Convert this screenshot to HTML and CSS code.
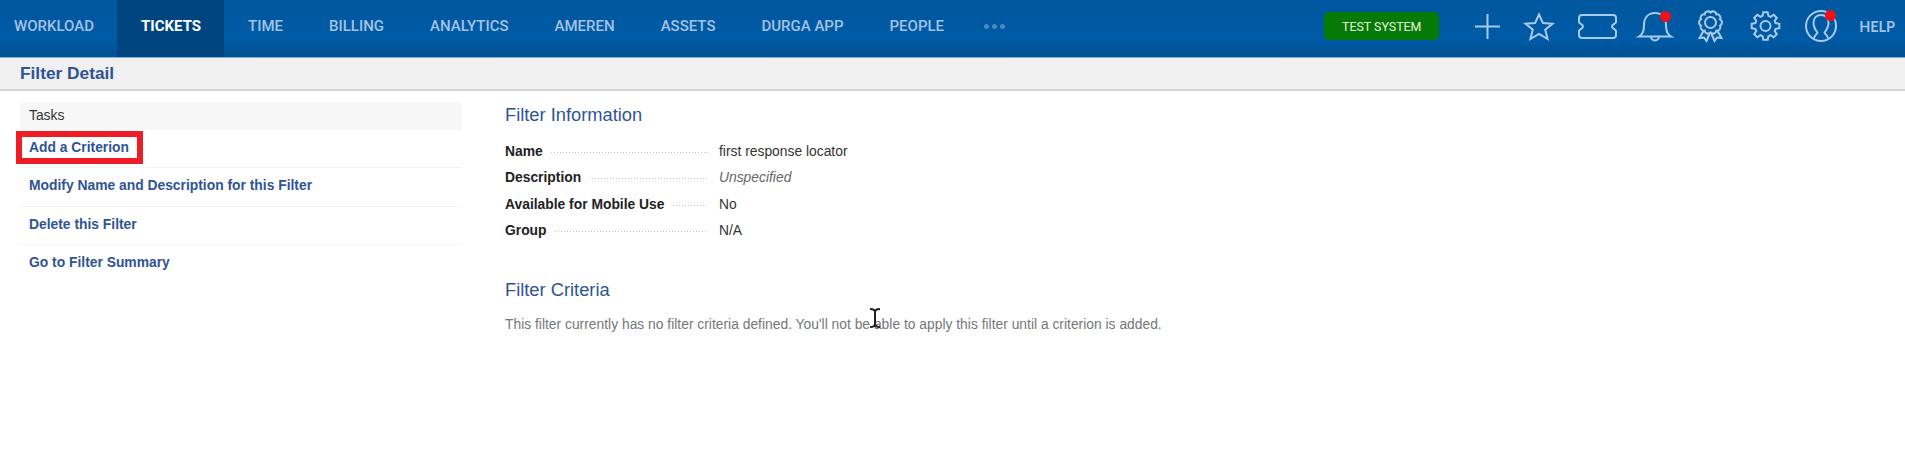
FILE: index.html
```html
<!DOCTYPE html>
<html>
	<head>
		<meta charset="utf-8">
		<title>Filter Detail</title>
		<link rel="stylesheet" href="styles.css">
	</head>
	<body>
		<header class="topbar">
			<nav class="mainnav">
				<a class="navitem">WORKLOAD</a>
				<a class="navitem active">TICKETS</a>
				<a class="navitem">TIME</a>
				<a class="navitem">BILLING</a>
				<a class="navitem">ANALYTICS</a>
				<a class="navitem">AMEREN</a>
				<a class="navitem">ASSETS</a>
				<a class="navitem">DURGA APP</a>
				<a class="navitem">PEOPLE</a>
				<span class="more"><i></i><i></i><i></i></span>
			</nav>
			<div class="tools">
				<span class="testsystem">TEST SYSTEM</span>
				<svg class="icon plus" viewBox="0 0 25 25"><path d="M12.5 0v25M0 12.5h25"/></svg>
				<svg class="icon star" viewBox="0 0 30 27"><path d="M15 1.5l3.900 8.500 9.600.7-7.300 6 2.400 9.300-8.600-5.100-8.600 5.100 2.400-9.300-7.300-6 9.600-.7z"/></svg>
				<svg class="icon ticket" viewBox="0 0 39 25"><path d="M4 1h31a3 3 0 0 1 3 3v4c0 2-4 2-4 4.500s4 2.500 4 4.500v4a3 3 0 0 1-3 3H4a3 3 0 0 1-3-3v-4c0-2 4-2 4-4.500S1 10 1 8V4a3 3 0 0 1 3-3z"/></svg>
				<span class="iconwrap bellwrap">
					<svg class="icon bell" viewBox="0 0 34 30"><path d="M1 25.500c3.500-2 5-5 5-11C6 7 10 2 17 2s11 5 11 12.500c0 6 1.500 9 5 11zM13 25.500a4 4 0 0 0 8 0"/></svg>
					<b class="dot"></b>
				</span>
				<svg class="icon rosette" viewBox="0 0 25 31"><path d="M12.500 1.500A3.400 3.400 0 0 1 18.380 3.410A3.400 3.400 0 0 1 22.010 8.410A3.400 3.400 0 0 1 22.010 14.590A3.400 3.400 0 0 1 18.380 19.590A3.400 3.400 0 0 1 12.500 21.500A3.400 3.400 0 0 1 6.620 19.590A3.400 3.400 0 0 1 2.990 14.590A3.400 3.400 0 0 1 2.990 8.410A3.400 3.400 0 0 1 6.620 3.410A3.400 3.400 0 0 1 12.500 1.500z"/><circle cx="12.500" cy="11.500" r="5.500"/><path d="M5.500 20l-4 7 4.500-.5 2.500 3.500 3-7M19.500 20l4 7-4.500-.5-2.500 3.500-3-7"/></svg>
				<svg class="icon gear" viewBox="0 0 31 30"><circle cx="15.500" cy="15" r="5"/><path d="M12.600 4.900L13.300 1.200H17.700L18.400 4.900L20.600 5.800L23.700 3.700L26.800 6.800L24.700 9.900L25.600 12.100L29.300 12.800V17.200L25.600 17.900L24.700 20.100L26.800 23.200L23.700 26.300L20.600 24.200L18.400 25.100L17.700 28.800H13.300L12.600 25.100L10.400 24.200L7.300 26.300L4.200 23.200L6.300 20.100L5.400 17.900L1.700 17.200V12.800L5.400 12.100L6.300 9.900L4.200 6.800L7.300 3.700L10.400 5.800z"/></svg>
				<span class="iconwrap userwrap">
					<svg class="icon user" viewBox="0 0 32 32"><circle cx="16" cy="16" r="15"/><path d="M9 28.500c0-3 3-4 3.500-6-2-2.500-4-5-4-9.500 0-5 3-8 7.500-8s7.500 3 7.500 8c0 4.500-2 7-4 9.500.5 2 3.500 3 3.500 6"/></svg>
					<b class="dot"></b>
				</span>
				<a class="help">HELP</a>
			</div>
		</header>
		<div class="titlebar">Filter Detail</div>
		<main class="content">
			<aside class="tasks">
				<div class="taskshead">Tasks</div>
				<a class="task"><span class="highlight">Add a Criterion</span></a>
				<a class="task">Modify Name and Description for this Filter</a>
				<a class="task">Delete this Filter</a>
				<a class="task">Go to Filter Summary</a>
			</aside>
			<section class="detail">
				<h2>Filter Information</h2>
				<dl class="info">
					<div class="inforow"><dt>Name</dt><dd>first response locator</dd></div>
					<div class="inforow"><dt>Description</dt><dd class="empty">Unspecified</dd></div>
					<div class="inforow"><dt>Available for Mobile Use</dt><dd>No</dd></div>
					<div class="inforow"><dt>Group</dt><dd>N/A</dd></div>
				</dl>
				<h2 class="criteria">Filter Criteria</h2>
				<p class="note">This filter currently has no filter criteria defined. You'll not be able to apply this filter until a criterion is added.</p>
				<svg class="cursor" viewBox="0 0 12 20"><path d="M1 1c3 0 5 .5 5 3v12c0 2.500-2 3-5 3M11 1c-3 0-5 .5-5 3M11 19c-3 0-5-.5-5-3"/></svg>
			</section>
		</main>
	</body>
</html>
```

FILE: styles.css
```css
html, body {
	margin: 0;
	height: 100%;
}

body {
	background-color: #ffffff;
	font-family: "Liberation Sans", Arial, sans-serif;
	font-size: 13.85px;
	color: #333333;
	overflow: hidden;
}

.topbar {
	display: flex;
	justify-content: space-between;
	height: 57px;
	background: linear-gradient(#00579f, #005aa5 70%, #00518f);
	border-bottom: 1px solid #7fb0dc;
}

.mainnav {
	display: flex;
	align-items: center;
	padding-left: 14px;
	font-family: Roboto, sans-serif;
	font-size: 15px;
	font-weight: 500;
	color: #a3c3e3;
}

.navitem {
	display: flex;
	align-items: center;
	box-sizing: border-box;
	height: 100%;
	margin-right: 46px;
	padding-bottom: 5px;
}

.navitem.active {
	margin: 0 24px 0 -23px;
	padding: 0 23px 5px 24px;
	background-color: #004480;
	color: #ffffff;
	font-weight: 700;
}

.more {
	display: flex;
	gap: 3px;
	margin: 0 0 5px -6px;
}

.more i {
	width: 5px;
	height: 5px;
	border-radius: 50%;
	background-color: #4f86bd;
}

.tools {
	display: flex;
	align-items: center;
	height: 52px;
	padding-right: 10px;
}

.testsystem {
	display: flex;
	align-items: center;
	justify-content: center;
	width: 115px;
	height: 28px;
	margin-right: 36px;
	border-radius: 5px;
	background-color: #067a06;
	color: #e6f5d8;
	font-family: Roboto, sans-serif;
	font-size: 12.4px;
}

.icon {
	display: block;
	overflow: visible;
	fill: none;
	stroke: #a8cbea;
	stroke-width: 2;
}

.plus { width: 25px; height: 25px; margin-right: 24px; }
.star { width: 30px; height: 27px; margin-right: 24px; }
.ticket { width: 39px; height: 25px; margin-right: 21px; }
.bell { width: 34px; height: 30px; }
.rosette { width: 25px; height: 31px; margin-right: 27px; }
.gear { width: 31px; height: 30px; margin-right: 24px; }
.user { width: 32px; height: 32px; }

.iconwrap {
	position: relative;
}

.bellwrap {
	margin-right: 26px;
}

.userwrap {
	margin-right: 22px;
}

.dot {
	position: absolute;
	top: 0;
	right: 1px;
	width: 11px;
	height: 11px;
	border-radius: 50%;
	background-color: #f0101c;
}

.help {
	font-family: Lato, sans-serif;
	font-size: 14.4px;
	font-weight: 700;
	color: #a3c3e3;
}

.titlebar {
	height: 31px;
	padding-left: 20px;
	background-color: #f0f0f0;
	border-bottom: 2px solid #d5d5d5;
	color: #2f5496;
	font-size: 17.3px;
	font-weight: 700;
	line-height: 31px;
}

.content {
	display: flex;
	padding: 11px 20px 0;
}

.tasks {
	width: 442px;
	margin-right: 43px;
}

.taskshead {
	height: 28px;
	padding-left: 9px;
	background-color: #f7f7f7;
	border-radius: 3px 3px 0 0;
	line-height: 26px;
}

.task {
	display: flex;
	align-items: center;
	box-sizing: border-box;
	height: 38.25px;
	padding: 0 0 3px 9px;
	border-bottom: 1px solid #f3f3f3;
	color: #2f5496;
	font-weight: 700;
}

.task:last-child {
	border-bottom: 0;
}

.highlight {
	margin-left: -13px;
	padding: 3px 8px 3px 7px;
	border: 6px solid #ee1c25;
	line-height: 15px;
}

.detail {
	position: relative;
	flex: 1;
	padding-top: 1px;
}

h2 {
	margin: 0;
	font-size: 18.3px;
	font-weight: 400;
	line-height: 24px;
	color: #2f5496;
}

.info {
	margin: 11px 0 0;
}

.inforow {
	display: flex;
	height: 26.4px;
	line-height: 26px;
}

dt {
	display: flex;
	flex: none;
	width: 214px;
	color: #222222;
	font-weight: 700;
}

/* dotted leader between label and value */
dt::after {
	content: "";
	flex: 1;
	height: 1px;
	margin: 14px 11px 0 8px;
	background: repeating-linear-gradient(90deg, #c4c4c4 0 1px, transparent 1px 3px);
}

dd {
	margin: 0;
}

.empty {
	font-style: italic;
	color: #666666;
}

.criteria {
	margin-top: 34px;
}

.note {
	margin: 14px 0 0;
	color: #777777;
}

.cursor {
	position: absolute;
	left: 364px;
	top: 206px;
	width: 12px;
	height: 20px;
	fill: none;
	stroke: #222222;
	stroke-width: 2;
}
```
